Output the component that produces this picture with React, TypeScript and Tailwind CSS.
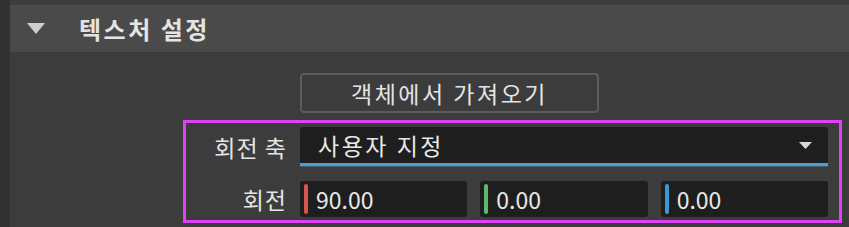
import React from 'react';

const font = { fontFamily: '"Noto Sans CJK KR", "Noto Sans", sans-serif' };

function NumberField({ value, bar }: { value: string; bar: string }) {
  return (
    <div className="flex-1 h-[36px] bg-[#1e1e1e] rounded-[3px] flex items-center pl-[4px]">
      <div className={`w-[4px] h-[30px] rounded-full ${bar}`} />
      <span className="ml-[8px] text-[23px] text-[#e8e8e8] leading-none">{value}</span>
    </div>
  );
}

export default function App() {
  return (
    <div className="w-[849px] h-[227px] bg-[#3c3c3c] flex overflow-hidden" style={font}>
      {/* left gutter */}
      <div className="w-[10px] bg-[#323232]" />

      <div className="flex-1 flex flex-col pt-[5px]">
        {/* section header */}
        <div className="h-[47px] bg-[#4a4a4a] flex items-center">
          <svg className="ml-[17px]" width="18" height="11" viewBox="0 0 18 11">
            <path d="M0 0h18l-9 11z" fill="#cfcfcf" />
          </svg>
          <span className="ml-[34px] text-[24px] font-bold text-[#e4e4e4] tracking-[2.5px] leading-none">텍스처 설정</span>
        </div>

        {/* import button */}
        <button className="mt-[21px] ml-[290px] w-[299px] h-[40px] border-2 border-[#5c5c5c] rounded-[4px] text-[23px] text-[#e4e4e4] flex items-center justify-center tracking-[2.5px] leading-none">
          객체에서 가져오기
        </button>

        {/* highlighted rotation block */}
        <div className="mt-[7px] ml-[173px] w-[659px] h-[103px] border-[3px] border-[#e040fb] pt-[4px] pr-[11px] flex flex-col gap-[14px]">
          <div className="flex items-center">
            <span className="w-[101px] text-right text-[23px] text-[#e4e4e4] tracking-[1px] leading-none">회전 축</span>
            <div className="ml-[13px] flex-1 h-[40px] bg-[#1e1e1e] rounded-t-[3px] flex flex-col">
              <div className="flex-1 flex items-center pl-[18px] pr-[16px]">
                <span className="flex-1 text-[23px] text-[#e8e8e8] tracking-[2.5px] leading-none">사용자 지정</span>
                <svg width="13" height="7" viewBox="0 0 13 7">
                  <path d="M0 0h13l-6.5 7z" fill="#d8d8d8" />
                </svg>
              </div>
              <div className="h-[3px] bg-[#4a9fd8]" />
              <div className="h-[1px] bg-[#4b5a66]" />
            </div>
          </div>

          <div className="flex items-center">
            <span className="w-[101px] text-right text-[23px] text-[#e4e4e4] tracking-[1px] leading-none">회전</span>
            <div className="ml-[13px] flex-1 flex gap-[13px]">
              <NumberField value="90.00" bar="bg-[#d9534f]" />
              <NumberField value="0.00" bar="bg-[#5fb86e]" />
              <NumberField value="0.00" bar="bg-[#3a9ad6]" />
            </div>
          </div>
        </div>
      </div>
    </div>
  );
}
